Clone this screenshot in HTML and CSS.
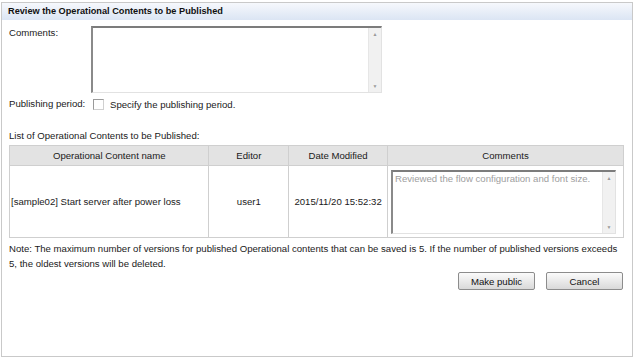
FILE: index.html
```html
<!DOCTYPE html>
<html>
<head>
    <title>Review the Operational Contents to be Published</title>
    <link rel="stylesheet" href="styles.css">
</head>
<body>
    <div class="panel">
        <div class="panel-title">Review the Operational Contents to be Published</div>
        <div class="panel-body">
            <div class="form-row comments-row">
                <label class="form-label">Comments:</label>
                <div class="textbox comments-box">
                    <div class="textbox-text"></div>
                    <div class="scrollbar"><span class="arrow">&#9650;</span><span class="arrow">&#9660;</span></div>
                </div>
            </div>

            <div class="form-row period-row">
                <label class="form-label">Publishing period:</label>
                <span class="checkbox"></span>
                <span>Specify the publishing period.</span>
            </div>

            <div class="list-label">List of Operational Contents to be Published:</div>

            <table class="contents-table">
                <tr>
                    <th class="col-name">Operational Content name</th>
                    <th class="col-editor">Editor</th>
                    <th class="col-date">Date Modified</th>
                    <th class="col-comments">Comments</th>
                </tr>
                <tr>
                    <td class="cell-name">[sample02] Start server after power loss</td>
                    <td>user1</td>
                    <td>2015/11/20 15:52:32</td>
                    <td class="cell-comments">
                        <div class="textbox row-box">
                            <div class="textbox-text placeholder">Reviewed the flow configuration and font size.</div>
                            <div class="scrollbar"><span class="arrow">&#9650;</span><span class="arrow">&#9660;</span></div>
                        </div>
                    </td>
                </tr>
            </table>

            <p class="note">Note: The maximum number of versions for published Operational contents that can be saved is 5. If the number of published versions exceeds 5, the oldest versions will be deleted.</p>

            <div class="actions">
                <button type="button" class="btn">Make public</button>
                <button type="button" class="btn">Cancel</button>
            </div>
        </div>
    </div>
</body>
</html>
```

FILE: styles.css
```css
body {
    margin: 0;
    background-color: #fff;
    font-family: "Liberation Sans", Arial, sans-serif;
    font-size: 9.6px;
    color: #1a1a1a;
}

.panel {
    margin: 2px 0 0 1px;
    width: 630px;
    height: 353px;
    border: 1px solid #c9c9c9;
    background-color: #fff;
}

.panel-title {
    height: 17px;
    line-height: 16px;
    padding-left: 6px;
    font-size: 9.2px;
    font-weight: bold;
    color: #111;
    background: linear-gradient(#f6f8fc, #dbe5f4);
}

.panel-body {
    padding: 6px 7px 0 7px;
}

.form-row {
    display: flex;
    align-items: flex-start;
}

.form-label {
    width: 82px;
    flex-shrink: 0;
    line-height: 12px;
}

.comments-row .form-label {
    padding-top: 1px;
}

.textbox {
    display: flex;
    box-sizing: border-box;
    border-top: 2px solid #7c7c7c;
    border-left: 2px solid #8a8a8a;
    border-right: 1px solid #e2e2e2;
    border-bottom: 1px solid #e2e2e2;
    background-color: #fff;
}

.comments-box {
    width: 291px;
    height: 67px;
}

.textbox-text {
    flex: 1;
    padding: 1px 2px;
    line-height: 12px;
}

.placeholder {
    color: #a0a0a0;
}

.scrollbar {
    width: 12px;
    display: flex;
    flex-direction: column;
    justify-content: space-between;
    align-items: center;
    background-color: #f1f1f1;
    border-left: 1px solid #e6e6e6;
    padding: 3px 0;
}

.arrow {
    font-size: 5px;
    color: #9a9a9a;
    line-height: 6px;
}

.period-row {
    margin-top: 5px;
    align-items: center;
}

.checkbox {
    width: 9px;
    height: 9px;
    border: 1px solid #9a9a9a;
    border-right-color: #d0d0d0;
    border-bottom-color: #d0d0d0;
    margin: 0 6px 0 2px;
    background-color: #fff;
}

.list-label {
    margin-top: 20px;
    line-height: 12px;
}

.contents-table {
    margin-top: 3px;
    width: 615px;
    border-collapse: collapse;
    border: 1px solid #cfcfcf;
}

.contents-table th,
.contents-table td {
    border: 1px solid #cfcfcf;
    text-align: center;
    font-weight: normal;
    padding: 0;
}

.contents-table th {
    height: 19px;
    background-color: #e3e3e3;
    color: #1a1a1a;
}

.contents-table td {
    height: 68px;
}

.col-name {
    width: 199px;
}

.col-editor {
    width: 79px;
}

.col-date {
    width: 98px;
}

.contents-table td.cell-name {
    text-align: left;
    padding-left: 1px;
}

.contents-table td.cell-comments {
    padding: 2px 7px 1px 3px;
    text-align: left;
}

.row-box {
    width: 225px;
    height: 64px;
}

.note {
    margin: 3px 0 0 0;
    line-height: 15px;
}

.actions {
    display: flex;
    justify-content: flex-end;
    gap: 11px;
    margin-top: 1px;
    padding-right: 2px;
}

.btn {
    width: 77px;
    height: 18px;
    padding: 0;
    font-family: inherit;
    font-size: 9.6px;
    color: #111;
    border: 1px solid #8c8c8c;
    border-radius: 2px;
    background: linear-gradient(#fbfbfb, #d9d9d9);
}
```
